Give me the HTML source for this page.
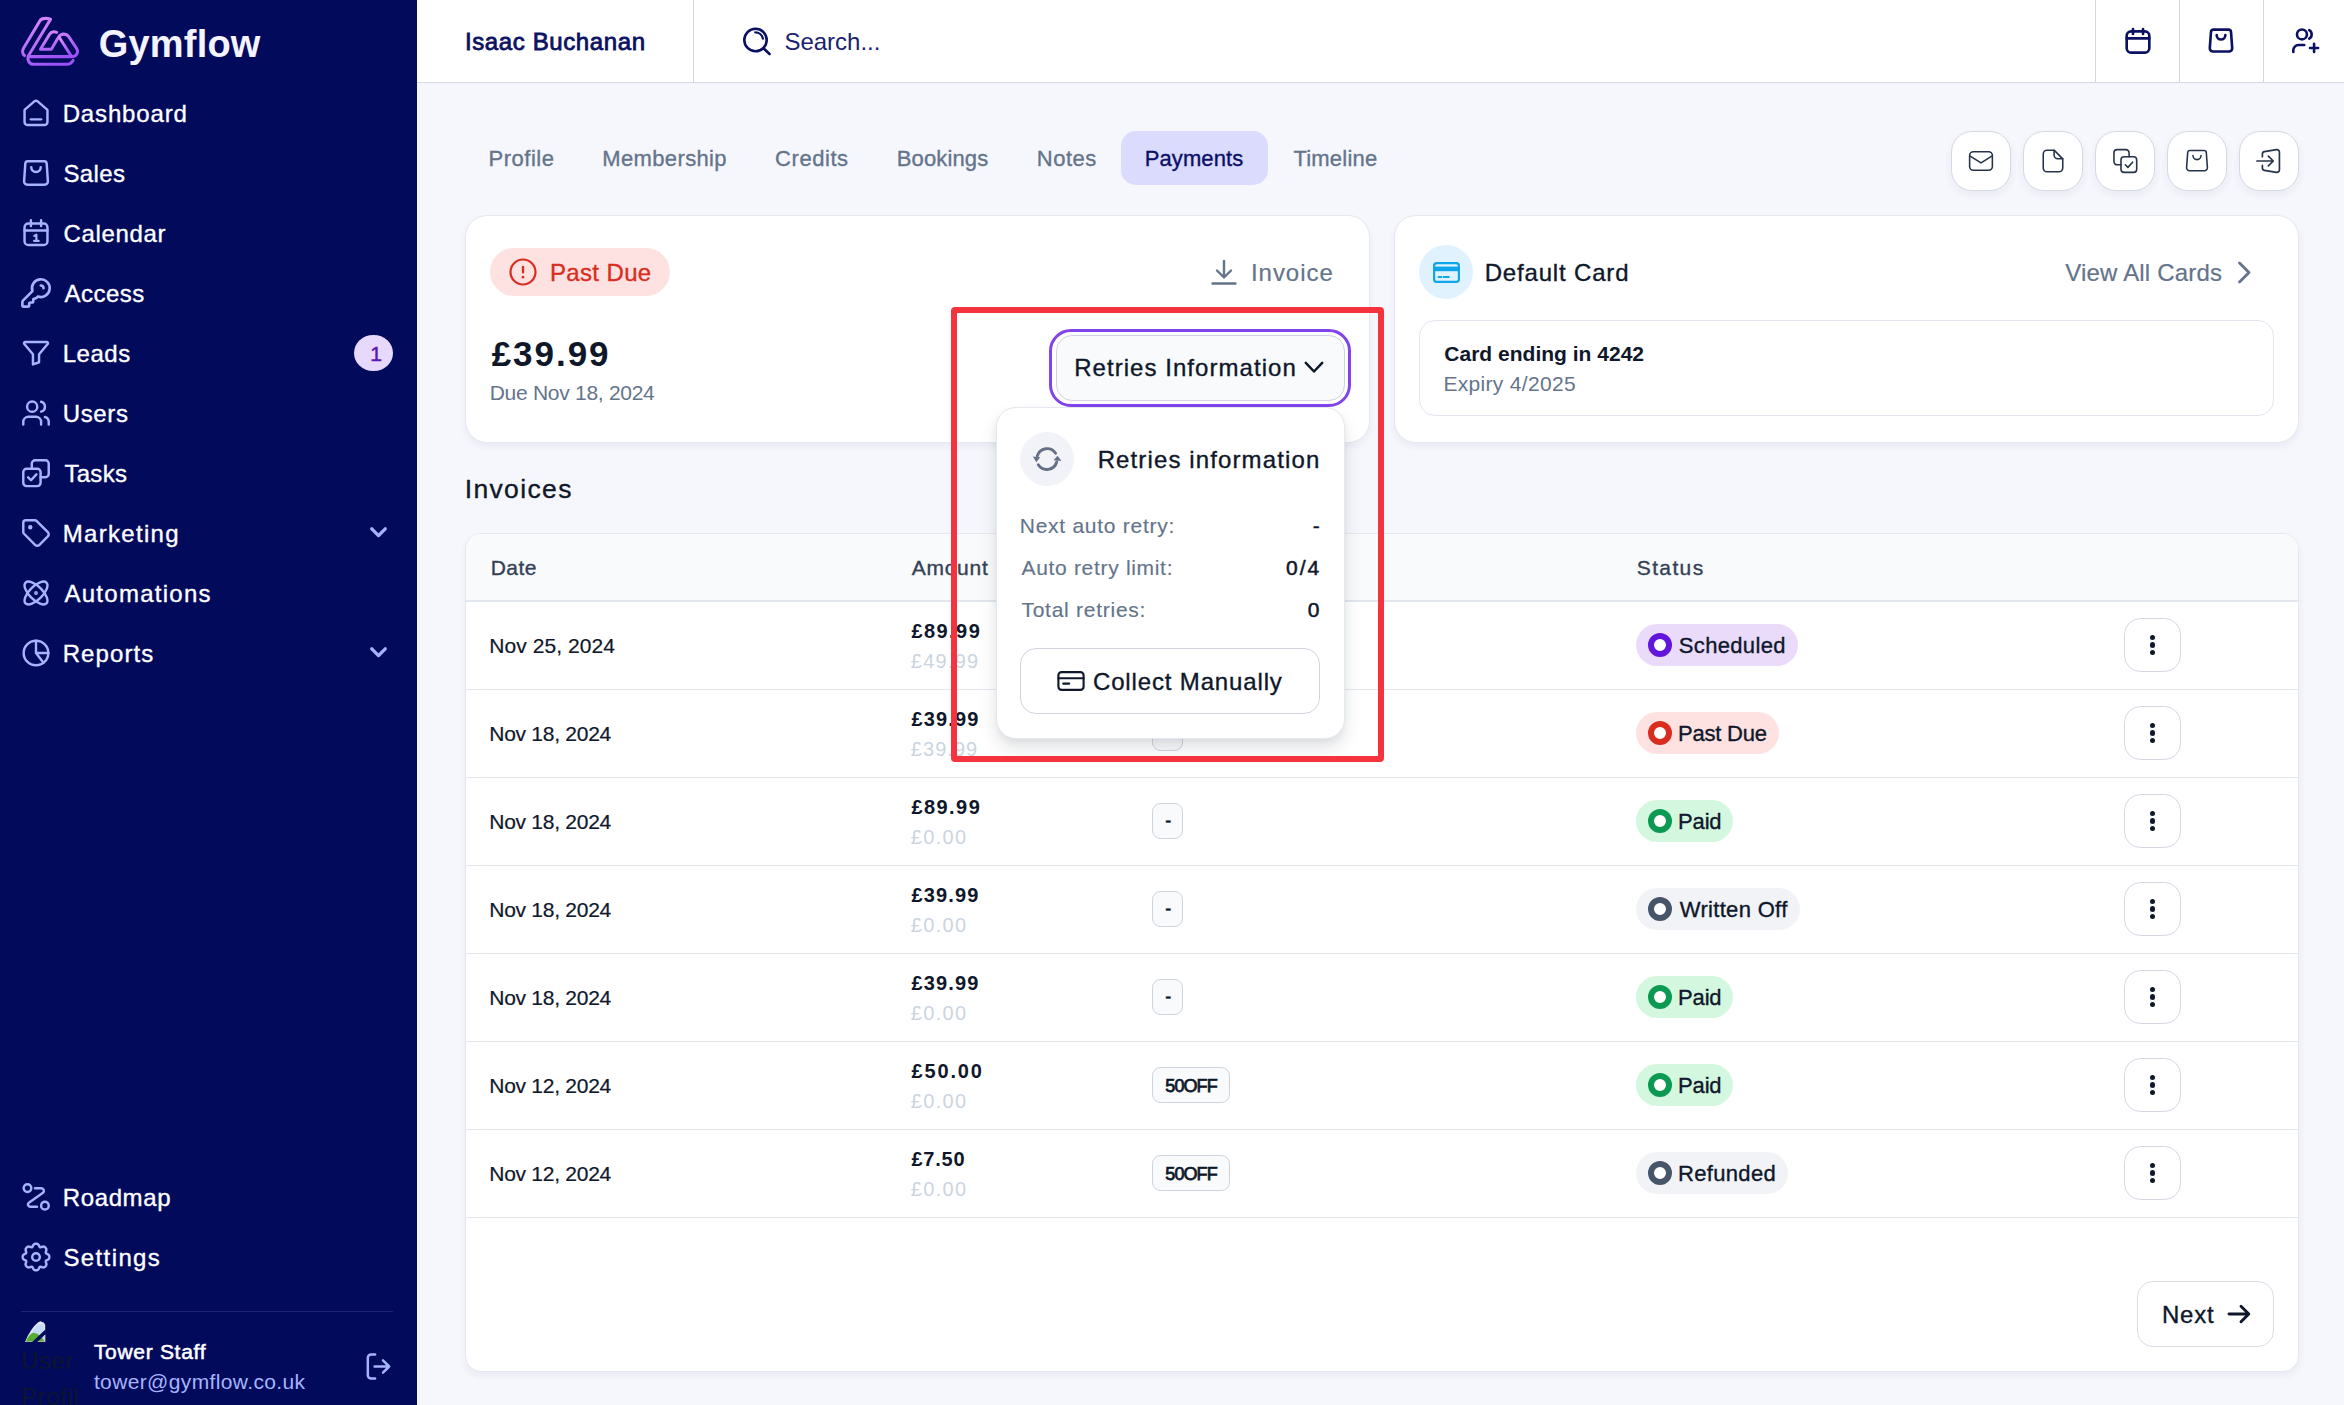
<!DOCTYPE html>
<html lang="en">
<head>
<meta charset="utf-8">
<title>Gymflow - Isaac Buchanan - Payments</title>
<style>
*{box-sizing:border-box;margin:0;padding:0}
html,body{width:2344px;height:1405px;overflow:hidden}
body{position:relative;background:#f6f7fd;font-family:"Liberation Sans",sans-serif;color:#0f172a}
.a{position:absolute}
.t{position:absolute;white-space:nowrap;z-index:2}
.t.pop{z-index:4}
svg{position:absolute;overflow:visible}
.si{fill:none;stroke:#a5b4fc;stroke-width:1.92;stroke-linecap:round;stroke-linejoin:round}
.ti{fill:none;stroke:#0b1162;stroke-width:2.25;stroke-linecap:round;stroke-linejoin:round}
.bi{fill:none;stroke:#27334a;stroke-width:1.45;stroke-linecap:round;stroke-linejoin:round}
#sidebar{left:0;top:0;width:417px;height:1405px;background:#020a5c}
#topbar{left:417px;top:0;width:1927px;height:83px;background:#fff;border-bottom:1.5px solid #d3d8e3}
.vd{top:0;width:1px;height:82px;background:#d2d6e0}
.card{background:#fff;border:1px solid #e6e8f0;border-radius:22px;box-shadow:0 4px 7px rgba(30,40,90,.06)}
.ib{top:131px;width:60px;height:60px;background:#fff;border:1px solid #d5d9e4;border-radius:21px;box-shadow:0 4px 8px rgba(30,40,90,.06)}
.hl{left:466px;width:1832px;height:1.5px;background:#e5e8ef}
.pill{left:1636px;height:42px;border-radius:21px}
.ring{left:1647.5px;width:24px;height:24px;border-radius:50%;background:#fff;border:6px solid}
.kb{left:2124px;width:57px;height:54px;background:#fff;border:1px solid #d3d8e2;border-radius:16.5px}
.kb i{position:absolute;left:25.2px;width:5.2px;height:5.2px;border-radius:50%;background:#0f172a}
.bd{left:1152.3px;height:35.4px;border:1.3px solid #ccd3df;background:#f9fafc;border-radius:8.5px}
</style>
</head>
<body>
<nav>
<!-- ================= SIDEBAR ================= -->
<div id="sidebar" class="a"></div>
<svg class="a" style="left:0;top:0" width="100" height="75" viewBox="0 0 100 75">
  <defs><linearGradient id="lg" x1="0.1" y1="0" x2="0.6" y2="1"><stop offset="0" stop-color="#dc8cfb"/><stop offset="1" stop-color="#9b51f6"/></linearGradient></defs>
  <g fill="none" stroke="url(#lg)" stroke-width="3.150" stroke-linecap="round" stroke-linejoin="round" transform="matrix(0.943 0 0 0.972 2.530 1.820)">
    <path d="M23.3 55.3 C20.6 53 20.6 50.6 22.4 47.5 L39.6 19.6 C41.5 16.6 46 16.6 51 17.8 L27.8 55 C25.5 59 28 64.3 33 64.3 H68 C71 64.3 73.5 62.5 74.8 60.3"/>
    <path d="M28.6 56.4 H73.5 C78.5 56.4 81 52 78.6 48.2 L70 35.6 C67.5 32.2 62 32.5 59.6 36 L51.8 48.8 H40.2 L50 33.2 C51.5 31 54.5 30.4 57.5 31.4"/>
    <path d="M60.6 37.2 L72.4 55"/>
  </g>
</svg>

<!-- nav icons (26px, centre x=36) -->
<svg class="si" style="left:22px;top:99px" width="28" height="28" viewBox="1 1 22 22"><path d="M3 9.6 10.7 2.9a2 2 0 0 1 2.6 0L21 9.6V19a2.5 2.5 0 0 1-2.5 2.500h-13A2.500 2.500 0 0 1 3 19z"/><path d="M8 17h8"/></svg>
<svg class="si" style="left:22px;top:159px" width="28" height="28" viewBox="1 1 22 22"><path d="M5.600 2.800h12.800a2 2 0 0 1 2 1.850l.95 13.900a2.500 2.500 0 0 1-2.500 2.650H5.150a2.500 2.500 0 0 1-2.500-2.650l.95-13.900a2 2 0 0 1 2-1.850z"/><path d="M8.300 7.500a3.700 3.700 0 0 0 7.400 0"/></svg>
<svg class="si" style="left:22px;top:219px" width="28" height="28" viewBox="1 1 22 22"><rect x="3" y="4.500" width="18" height="17" rx="3"/><path d="M3 10h18M8 2v4.500M16 2v4.500"/><path d="M10.700 14.300 12.300 13.300v4.900M10.500 18.200h3.600" stroke-width="1.700"/></svg>
<svg class="si" style="left:21px;top:278px" width="30" height="30" viewBox="1 1 22 22"><path d="M2.586 17.414A2 2 0 0 0 2 18.828V21a1 1 0 0 0 1 1h3a1 1 0 0 0 1-1v-1a1 1 0 0 1 1-1h1a1 1 0 0 0 1-1v-1a1 1 0 0 1 1-1h.172a2 2 0 0 0 1.414-.586l.814-.814a6.500 6.500 0 1 0-4-4z"/><path d="M15.500 6.500a2 2 0 0 1 2 2"/></svg>
<svg class="si" style="left:22px;top:339px" width="28" height="28" viewBox="1 1 22 22"><path d="M3.600 3.300h16.800a1 1 0 0 1 .78 1.650l-6.780 8v6.300l-4.800 1.700v-8l-6.780-8a1 1 0 0 1 .78-1.650z"/></svg>
<svg class="si" style="left:22px;top:399px" width="28" height="28" viewBox="1 1 22 22"><path d="M16 21v-2a4 4 0 0 0-4-4H6a4 4 0 0 0-4 4v2"/><circle cx="9" cy="7" r="4"/><path d="M22 21v-2a4 4 0 0 0-3-3.870"/><path d="M16 3.130a4 4 0 0 1 0 7.750"/></svg>
<svg class="si" style="left:22px;top:459px" width="28" height="28" viewBox="1 1 22 22"><rect x="2" y="8.700" width="13.600" height="13.600" rx="2.600"/><path d="M8.700 8.700V4.600A2.600 2.600 0 0 1 11.300 2h8.100A2.600 2.600 0 0 1 22 4.600v8.100a2.600 2.600 0 0 1-2.600 2.600h-3.800"/><path d="M5.800 15.400l2.300 2.300 4.200-4.600"/></svg>
<svg class="si" style="left:22px;top:519px" width="28" height="28" viewBox="1 1 22 22"><path d="M12.586 2.586A2 2 0 0 0 11.172 2H4a2 2 0 0 0-2 2v7.172a2 2 0 0 0 .586 1.414l8.704 8.704a2.426 2.426 0 0 0 3.420 0l6.580-6.580a2.426 2.426 0 0 0 0-3.420z"/><circle cx="7.500" cy="7.500" r=".8" fill="#a5b4fc"/></svg>
<svg class="si" style="left:22px;top:579px" width="28" height="28" viewBox="1 1 22 22"><circle cx="12" cy="12" r=".55" fill="#a5b4fc"/><path d="M20.200 20.200c2.040-2.030.020-7.360-4.500-11.900-4.540-4.520-9.870-6.540-11.900-4.500-2.040 2.030-.020 7.360 4.500 11.900 4.540 4.520 9.870 6.540 11.900 4.500Z"/><path d="M15.700 15.700c4.520-4.540 6.540-9.870 4.500-11.900-2.030-2.040-7.360-.020-11.900 4.500-4.520 4.540-6.540 9.870-4.500 11.900 2.030 2.040 7.360.020 11.900-4.500Z"/></svg>
<svg class="si" style="left:22px;top:639px" width="28" height="28" viewBox="1 1 22 22"><circle cx="12" cy="12" r="9.700"/><path d="M12 2.300V12h9.700M12 12l5.900 7.700"/></svg>
<svg class="si" style="left:22px;top:1183px" width="28" height="28" viewBox="1 1 22 22"><circle cx="5.300" cy="5" r="3"/><circle cx="19" cy="18.800" r="3"/><path d="M11.200 5.200h5a2 2 0 0 1 1.300 3.500L6.400 16.500a1.700 1.700 0 0 0 1 3.100h5.400"/></svg>
<svg class="si" style="left:22px;top:1243px" width="28" height="28" viewBox="1 1 22 22"><path d="M22.45 12.00 22.44 12.41 22.38 12.82 22.24 13.21 21.98 13.58 21.62 13.91 21.17 14.20 20.69 14.45 20.25 14.68 19.92 14.92 19.71 15.20 19.66 15.53 19.73 15.94 19.88 16.41 20.04 16.93 20.15 17.45 20.18 17.94 20.09 18.38 19.92 18.76 19.67 19.09 19.39 19.39 19.09 19.67 18.76 19.92 18.38 20.09 17.94 20.18 17.45 20.15 16.93 20.04 16.41 19.88 15.94 19.73 15.53 19.66 15.20 19.71 14.92 19.92 14.68 20.25 14.45 20.69 14.20 21.17 13.91 21.62 13.58 21.98 13.21 22.24 12.82 22.38 12.41 22.44 12.00 22.45 11.59 22.44 11.18 22.38 10.79 22.24 10.42 21.98 10.09 21.62 9.80 21.17 9.55 20.69 9.32 20.25 9.08 19.92 8.80 19.71 8.47 19.66 8.06 19.73 7.59 19.88 7.07 20.04 6.55 20.15 6.06 20.18 5.62 20.09 5.24 19.92 4.91 19.67 4.61 19.39 4.33 19.09 4.08 18.76 3.91 18.38 3.82 17.94 3.85 17.45 3.96 16.93 4.12 16.41 4.27 15.94 4.34 15.53 4.29 15.20 4.08 14.92 3.75 14.68 3.31 14.45 2.83 14.20 2.38 13.91 2.02 13.58 1.76 13.21 1.62 12.82 1.56 12.41 1.55 12.00 1.56 11.59 1.62 11.18 1.76 10.79 2.02 10.42 2.38 10.09 2.83 9.80 3.31 9.55 3.75 9.32 4.08 9.08 4.29 8.80 4.34 8.47 4.27 8.06 4.12 7.59 3.96 7.07 3.85 6.55 3.82 6.06 3.91 5.62 4.08 5.24 4.33 4.91 4.61 4.61 4.91 4.33 5.24 4.08 5.62 3.91 6.06 3.82 6.55 3.85 7.07 3.96 7.59 4.12 8.06 4.27 8.47 4.34 8.80 4.29 9.08 4.08 9.32 3.75 9.55 3.31 9.80 2.83 10.09 2.38 10.42 2.02 10.79 1.76 11.18 1.62 11.59 1.56 12.00 1.55 12.41 1.56 12.82 1.62 13.21 1.76 13.58 2.02 13.91 2.38 14.20 2.83 14.45 3.31 14.68 3.75 14.92 4.08 15.20 4.29 15.53 4.34 15.94 4.27 16.41 4.12 16.93 3.96 17.45 3.85 17.94 3.82 18.38 3.91 18.76 4.08 19.09 4.33 19.39 4.61 19.67 4.91 19.92 5.24 20.09 5.62 20.18 6.06 20.15 6.55 20.04 7.07 19.88 7.59 19.73 8.06 19.66 8.47 19.71 8.80 19.92 9.08 20.25 9.32 20.69 9.55 21.17 9.80 21.62 10.09 21.98 10.42 22.24 10.79 22.38 11.18 22.44 11.59z"/><circle cx="12" cy="12" r="3"/></svg>

<!-- Leads badge + chevrons -->
<div class="a" style="left:354px;top:334.500px;width:39.200px;height:36.800px;border-radius:50%;background:#e7d9fb"></div>
<svg style="left:370px;top:527px" width="17" height="11" viewBox="0 0 17 11"><path d="M1.800 1.800 8.500 8.600 15.200 1.800" fill="none" stroke="#a5b4fc" stroke-width="3.3" stroke-linecap="round" stroke-linejoin="round"/></svg>
<svg style="left:370px;top:647px" width="17" height="11" viewBox="0 0 17 11"><path d="M1.800 1.800 8.500 8.600 15.200 1.800" fill="none" stroke="#a5b4fc" stroke-width="3.3" stroke-linecap="round" stroke-linejoin="round"/></svg>

<!-- user footer -->
<div class="a" style="left:21px;top:1311px;width:372px;height:1px;background:#1c2574"></div>
<svg style="left:25px;top:1321px" width="21" height="22" viewBox="0 0 21 22"><path d="M0 21Q5.500 7.500 13.200 1.300L15.500 0.200 19 1.800 20.200 4V21z" fill="#e3e6ec"/><path d="M1.800 20Q7 8.500 13.500 3.400H18.700V20z" fill="#c5daf6"/><path d="M0.600 21Q4.500 12 8.500 11.800 13.500 12 19.200 19.500V21z" fill="#57ad33"/><path d="M0 20.300H20.200V21H0z" fill="#b9b9b9"/><path d="M6.600 21.500 20.700 8.300V13.200L11.600 21.500z" fill="#020a5c"/><path d="M19 14.800V20.300H20.200V13.700z" fill="#d0d0d0"/></svg>
<div class="a" style="left:21px;top:1343px;width:57px;height:62px;overflow:hidden;font-size:24px;line-height:36px;color:#0d1430;letter-spacing:.6px">User Profile</div>
<svg class="si" style="left:365px;top:1353px;stroke-width:2.200" width="27" height="27" viewBox="0 0 24 24"><path d="M9 22.700H5.500a3 3 0 0 1-3-3V4.300a3 3 0 0 1 3-3H9"/><path d="M16 17.500l5.500-5.500L16 6.500M21.500 12H8.500"/></svg>

<span class="t" style="left:98.79px;top:24.83px;font-size:38px;line-height:38px;color:#f5f3ff;letter-spacing:0.195px;font-weight:700;">Gymflow</span>
<span class="t" style="left:62.66px;top:101.68px;font-size:24px;line-height:24px;color:#ffffff;letter-spacing:0.857px;-webkit-text-stroke:0.35px #ffffff;">Dashboard</span>
<span class="t" style="left:63.45px;top:161.68px;font-size:24px;line-height:24px;color:#ffffff;letter-spacing:0.381px;-webkit-text-stroke:0.35px #ffffff;">Sales</span>
<span class="t" style="left:63.49px;top:221.68px;font-size:24px;line-height:24px;color:#ffffff;letter-spacing:0.657px;-webkit-text-stroke:0.35px #ffffff;">Calendar</span>
<span class="t" style="left:64.49px;top:281.68px;font-size:24px;line-height:24px;color:#ffffff;letter-spacing:0.505px;-webkit-text-stroke:0.35px #ffffff;">Access</span>
<span class="t" style="left:62.66px;top:341.68px;font-size:24px;line-height:24px;color:#ffffff;letter-spacing:0.551px;-webkit-text-stroke:0.35px #ffffff;">Leads</span>
<span class="t" style="left:62.76px;top:401.68px;font-size:24px;line-height:24px;color:#ffffff;letter-spacing:0.636px;-webkit-text-stroke:0.35px #ffffff;">Users</span>
<span class="t" style="left:64.42px;top:461.68px;font-size:24px;line-height:24px;color:#ffffff;letter-spacing:0.308px;-webkit-text-stroke:0.35px #ffffff;">Tasks</span>
<span class="t" style="left:62.66px;top:521.68px;font-size:24px;line-height:24px;color:#ffffff;letter-spacing:1.318px;-webkit-text-stroke:0.35px #ffffff;">Marketing</span>
<span class="t" style="left:64.49px;top:581.68px;font-size:24px;line-height:24px;color:#ffffff;letter-spacing:1.261px;-webkit-text-stroke:0.35px #ffffff;">Automations</span>
<span class="t" style="left:62.66px;top:641.68px;font-size:24px;line-height:24px;color:#ffffff;letter-spacing:1.101px;-webkit-text-stroke:0.35px #ffffff;">Reports</span>
<span class="t" style="left:62.66px;top:1185.68px;font-size:24px;line-height:24px;color:#ffffff;letter-spacing:0.648px;-webkit-text-stroke:0.35px #ffffff;">Roadmap</span>
<span class="t" style="left:63.45px;top:1245.68px;font-size:24px;line-height:24px;color:#ffffff;letter-spacing:1.386px;-webkit-text-stroke:0.35px #ffffff;">Settings</span>
<span class="t" style="left:370.22px;top:343.22px;font-size:21px;line-height:21px;color:#5a17b5;-webkit-text-stroke:0.5px #5a17b5;">1</span>
<span class="t" style="left:93.95px;top:1341.22px;font-size:21px;line-height:21px;color:#ffffff;letter-spacing:0.687px;-webkit-text-stroke:0.55px #ffffff;">Tower Staff</span>
<span class="t" style="left:93.92px;top:1370.72px;font-size:21px;line-height:21px;color:#a5b4fc;letter-spacing:0.368px;">tower@gymflow.co.uk</span>
</nav>
<header>
<!-- ================= TOP BAR ================= -->
<div id="topbar" class="a"></div>
<div class="a vd" style="left:692.5px"></div>
<div class="a vd" style="left:2095px"></div>
<div class="a vd" style="left:2179px"></div>
<div class="a vd" style="left:2263px"></div>
<svg class="ti" style="left:742px;top:26px;stroke-width:2.600" width="30" height="30" viewBox="0 0 30 30"><circle cx="13.500" cy="14" r="11.200"/><path d="M21.500 22.300 27.500 28"/><path d="M13.200 6.300a7.800 7.800 0 0 1 7.700 6.300" stroke-width="2.300"/></svg>
<svg class="ti" style="left:2124px;top:27px" width="28" height="28" viewBox="0 0 24 24"><rect x="2.300" y="3.800" width="19.400" height="18.200" rx="3.800"/><path d="M2.300 9.800h19.400M7.700 1.800v4.200M16.300 1.800v4.200"/></svg>
<svg class="ti" style="left:2207px;top:27px" width="28" height="28" viewBox="0 0 24 24"><path d="M5.600 2.300h12.800a2.200 2.200 0 0 1 2.200 2l1 13.800a2.700 2.700 0 0 1-2.700 2.900H5.100a2.700 2.700 0 0 1-2.700-2.900l1-13.800a2.200 2.200 0 0 1 2.200-2z"/><path d="M8.300 7a3.700 3.700 0 0 0 7.400 0"/></svg>
<svg class="ti" style="left:2291px;top:27px" width="30" height="28" viewBox="0 0 26 24"><circle cx="9.500" cy="6.300" r="4.300"/><path d="M2 21.500v-1.500a4.500 4.500 0 0 1 4.500-4.500h5"/><path d="M15.800 2.600a4.300 4.300 0 0 1 0 7.400"/><path d="M20 14.500v7M16.500 18h7"/></svg>

<span class="t" style="left:464.89px;top:29.68px;font-size:24px;line-height:24px;color:#0b1162;letter-spacing:0.620px;-webkit-text-stroke:0.8px #0b1162;">Isaac Buchanan</span>
<span class="t" style="left:784.41px;top:29.68px;font-size:24px;line-height:24px;color:#1b2270;">Search...</span>
</header>
<main>
<section>
<!-- ================= TABS + ACTION BUTTONS ================= -->
<div class="a" style="left:1121px;top:131px;width:147px;height:54px;border-radius:15px;background:#dadbfd"></div>
<div class="a ib" style="left:1951px"></div>
<div class="a ib" style="left:2023px"></div>
<div class="a ib" style="left:2095px"></div>
<div class="a ib" style="left:2167px"></div>
<div class="a ib" style="left:2239px"></div>
<svg class="bi" style="left:1968px;top:148px" width="26" height="26" viewBox="0 0 24 24"><rect x="1.500" y="3.500" width="21" height="17" rx="3.500"/><path d="M2 7.500l10 6.300 10-6.300"/></svg>
<svg class="bi" style="left:2040px;top:148px" width="26" height="26" viewBox="0 0 24 24"><path d="M13 2H6.500A3.500 3.500 0 0 0 3 5.500v13A3.500 3.500 0 0 0 6.500 22h11a3.500 3.500 0 0 0 3.500-3.500V10z"/><path d="M13 2v4.500A3.500 3.500 0 0 0 16.500 10H21"/></svg>
<svg class="bi" style="left:2112px;top:148px" width="26" height="26" viewBox="0 0 24 24"><path d="M8.300 15.500H4.800a3 3 0 0 1-3-3V4.500a3 3 0 0 1 3-3h8a3 3 0 0 1 3 3V8"/><rect x="8.300" y="8" width="14.500" height="14.500" rx="3"/><path d="M12.300 15.500l2.400 2.400 4.300-4.800"/></svg>
<svg class="bi" style="left:2184px;top:148px" width="26" height="26" viewBox="0 0 24 24"><path d="M5.600 2.300h12.800a2.200 2.200 0 0 1 2.200 2l1 13.800a2.700 2.700 0 0 1-2.700 2.900H5.100a2.700 2.700 0 0 1-2.700-2.900l1-13.800a2.200 2.200 0 0 1 2.200-2z"/><path d="M8.300 7a3.700 3.700 0 0 0 7.400 0"/></svg>
<svg class="bi" style="left:2254px;top:147px" width="28" height="28" viewBox="0 0 24 24"><path d="M7.200 8.300V6a2 2 0 0 1 1.700-2l10.300-1.700a2.200 2.200 0 0 1 2.600 2.200v15a2.200 2.200 0 0 1-2.600 2.200L8.900 20a2 2 0 0 1-1.700-2v-2.300"/><path d="M2.500 12h14M12.300 7.800l4.200 4.200-4.200 4.200"/></svg>

<span class="t" style="left:488.56px;top:147.63px;font-size:22px;line-height:22px;color:#64748b;letter-spacing:0.516px;-webkit-text-stroke:0.35px #64748b;">Profile</span>
<span class="t" style="left:602.31px;top:147.63px;font-size:22px;line-height:22px;color:#64748b;letter-spacing:0.359px;-webkit-text-stroke:0.35px #64748b;">Membership</span>
<span class="t" style="left:775.04px;top:147.63px;font-size:22px;line-height:22px;color:#64748b;letter-spacing:0.566px;-webkit-text-stroke:0.35px #64748b;">Credits</span>
<span class="t" style="left:896.81px;top:147.63px;font-size:22px;line-height:22px;color:#64748b;letter-spacing:0.134px;-webkit-text-stroke:0.35px #64748b;">Bookings</span>
<span class="t" style="left:1036.81px;top:147.63px;font-size:22px;line-height:22px;color:#64748b;letter-spacing:0.478px;-webkit-text-stroke:0.35px #64748b;">Notes</span>
<span class="t" style="left:1293.42px;top:147.63px;font-size:22px;line-height:22px;color:#64748b;letter-spacing:0.207px;-webkit-text-stroke:0.35px #64748b;">Timeline</span>
<span class="t" style="left:1144.81px;top:147.63px;font-size:22px;line-height:22px;color:#0b0f66;letter-spacing:0.081px;-webkit-text-stroke:0.35px #0b0f66;">Payments</span>
</section>
<section>
<!-- ================= LEFT CARD ================= -->
<div class="a card" style="left:465px;top:215px;width:905px;height:227.5px"></div>
<div class="a" style="left:490px;top:248px;width:180px;height:48px;border-radius:24px;background:#fee2e2"></div>
<svg style="left:509px;top:258px" width="28" height="28" viewBox="0 0 28 28"><circle cx="14" cy="14" r="12.500" fill="none" stroke="#d92d20" stroke-width="2.200"/><path d="M14 8.800v5.600" stroke="#d92d20" stroke-width="2.300" stroke-linecap="round"/><circle cx="14" cy="19.200" r="1.350" fill="#d92d20"/></svg>
<svg style="left:1211px;top:259px" width="26" height="26" viewBox="0 0 26 26"><path d="M13 2v16M6 11.500l7 7 7-7M1.500 24.500h23" fill="none" stroke="#64748b" stroke-width="2.400" stroke-linecap="round" stroke-linejoin="round"/></svg>
<!-- retries button -->
<div class="a" style="left:1049px;top:329px;width:302px;height:78px;border-radius:22px;border:3px solid #8243ec;background:#fff"></div>
<div class="a" style="left:1056px;top:335px;width:289px;height:66px;border-radius:16px;border:1px solid #cfd4de;background:#f9fafc"></div>
<svg style="left:1304px;top:361px" width="20" height="13" viewBox="0 0 20 13"><path d="M1.800 1.800 10 10.500 18.200 1.800" fill="none" stroke="#0f172a" stroke-width="2.500" stroke-linecap="round" stroke-linejoin="round"/></svg>

<span class="t" style="left:549.91px;top:260.93px;font-size:24px;line-height:24px;color:#d92d20;letter-spacing:0.371px;-webkit-text-stroke:0.35px #d92d20;">Past Due</span>
<span class="t" style="left:1250.97px;top:260.93px;font-size:24px;line-height:24px;color:#64748b;letter-spacing:0.955px;-webkit-text-stroke:0.2px #64748b;">Invoice</span>
<span class="t" style="left:491.66px;top:335.97px;font-size:35px;line-height:35px;color:#0f172a;letter-spacing:1.967px;font-weight:700;">£39.99</span>
<span class="t" style="left:489.68px;top:382.22px;font-size:21px;line-height:21px;color:#64748b;letter-spacing:-0.277px;">Due Nov 18, 2024</span>
<span class="t" style="left:1074.16px;top:355.98px;font-size:24px;line-height:24px;color:#0f172a;letter-spacing:1.048px;-webkit-text-stroke:0.35px #0f172a;">Retries Information</span>
</section>
<section>
<!-- ================= RIGHT CARD ================= -->
<div class="a card" style="left:1394px;top:215px;width:905px;height:227.5px"></div>
<div class="a" style="left:1419px;top:245px;width:54px;height:54px;border-radius:50%;background:#e0f2fe"></div>
<svg style="left:1433px;top:261.500px" width="27" height="21" viewBox="0 0 27 21"><rect x="1.100" y="1.100" width="24.800" height="18.800" rx="2.600" fill="none" stroke="#0ea5e9" stroke-width="2.200"/><rect x="1.100" y="4.600" width="24.800" height="4.600" fill="#0ea5e9"/><path d="M5.600 15h2.800M10.800 15h5" stroke="#0ea5e9" stroke-width="2.100" stroke-linecap="round"/></svg>
<svg style="left:2237px;top:261px" width="15" height="23" viewBox="0 0 15 23"><path d="M2.500 2 12 11.500 2.500 21" fill="none" stroke="#64748b" stroke-width="2.800" stroke-linecap="round" stroke-linejoin="round"/></svg>
<div class="a" style="left:1419px;top:320px;width:855px;height:96px;border-radius:16px;border:1px solid #e2e6ee;background:#fff"></div>

<span class="t" style="left:1484.66px;top:260.93px;font-size:24px;line-height:24px;color:#0f172a;letter-spacing:0.829px;-webkit-text-stroke:0.35px #0f172a;">Default Card</span>
<span class="t" style="left:2065.21px;top:260.93px;font-size:24px;line-height:24px;color:#64748b;letter-spacing:0.200px;-webkit-text-stroke:0.2px #64748b;">View All Cards</span>
<span class="t" style="left:1444.32px;top:343.47px;font-size:21px;line-height:21px;color:#0f172a;letter-spacing:0.008px;font-weight:700;">Card ending in 4242</span>
<span class="t" style="left:1443.43px;top:373.47px;font-size:21px;line-height:21px;color:#64748b;letter-spacing:0.314px;">Expiry 4/2025</span>
</section>
<section>
<!-- ================= TABLE ================= -->
<div class="a card" style="left:465px;top:533px;width:1834px;height:839px;overflow:hidden;border-radius:16px">
  <div class="a" style="left:0;top:0;width:1834px;height:67px;background:#f9fafb"></div>
</div>
<div class="a hl" style="top:600px;height:2px;background:#e3e6ee"></div>
<div class="a hl" style="top:688.500px"></div>
<div class="a hl" style="top:776.500px"></div>
<div class="a hl" style="top:864.500px"></div>
<div class="a hl" style="top:952.500px"></div>
<div class="a hl" style="top:1040.500px"></div>
<div class="a hl" style="top:1128.500px"></div>
<div class="a hl" style="top:1216.500px"></div>
<div class="a pill" style="top:624px;width:162px;background:#eadbfb"></div>
<div class="a ring" style="top:633px;border-color:#6316db"></div>
<div class="a kb" style="top:618px"><i style="top:15.5px"></i><i style="top:23.4px"></i><i style="top:31.3px"></i></div>
<div class="a bd" style="top:627.2px;width:30.4px"></div>
<div class="a pill" style="top:712px;width:143px;background:#fee2e2"></div>
<div class="a ring" style="top:721px;border-color:#d92d20"></div>
<div class="a kb" style="top:706px"><i style="top:15.5px"></i><i style="top:23.4px"></i><i style="top:31.3px"></i></div>
<div class="a bd" style="top:715.2px;width:30.4px"></div>
<div class="a pill" style="top:800px;width:97px;background:#d3f8df"></div>
<div class="a ring" style="top:809px;border-color:#0c9a52"></div>
<div class="a kb" style="top:794px"><i style="top:15.5px"></i><i style="top:23.4px"></i><i style="top:31.3px"></i></div>
<div class="a bd" style="top:803.2px;width:30.4px"></div>
<div class="a pill" style="top:888px;width:164px;background:#f1f3f7"></div>
<div class="a ring" style="top:897px;border-color:#475569"></div>
<div class="a kb" style="top:882px"><i style="top:15.5px"></i><i style="top:23.4px"></i><i style="top:31.3px"></i></div>
<div class="a bd" style="top:891.2px;width:30.4px"></div>
<div class="a pill" style="top:976px;width:97px;background:#d3f8df"></div>
<div class="a ring" style="top:985px;border-color:#0c9a52"></div>
<div class="a kb" style="top:970px"><i style="top:15.5px"></i><i style="top:23.4px"></i><i style="top:31.3px"></i></div>
<div class="a bd" style="top:979.2px;width:30.4px"></div>
<div class="a pill" style="top:1064px;width:97px;background:#d3f8df"></div>
<div class="a ring" style="top:1073px;border-color:#0c9a52"></div>
<div class="a kb" style="top:1058px"><i style="top:15.5px"></i><i style="top:23.4px"></i><i style="top:31.3px"></i></div>
<div class="a bd" style="top:1067.2px;width:77.6px"></div>
<div class="a pill" style="top:1152px;width:152px;background:#f1f3f7"></div>
<div class="a ring" style="top:1161px;border-color:#475569"></div>
<div class="a kb" style="top:1146px"><i style="top:15.5px"></i><i style="top:23.4px"></i><i style="top:31.3px"></i></div>
<div class="a bd" style="top:1155.2px;width:77.6px"></div>
<!-- next -->
<div class="a" style="left:2137px;top:1281px;width:137px;height:66px;border-radius:16px;border:1px solid #d9dde7;background:#fff"></div>
<svg style="left:2227px;top:1303px" width="24" height="22" viewBox="0 0 24 22"><path d="M2 11h19.500M14 3.200l7.800 7.800-7.800 7.800" fill="none" stroke="#0f172a" stroke-width="2.900" stroke-linecap="round" stroke-linejoin="round"/></svg>

<span class="t" style="left:464.69px;top:475.57px;font-size:26.5px;line-height:26.5px;color:#0f172a;letter-spacing:1.355px;-webkit-text-stroke:0.35px #0f172a;">Invoices</span>
<span class="t" style="left:490.65px;top:557.22px;font-size:21px;line-height:21px;color:#334155;letter-spacing:0.457px;-webkit-text-stroke:0.35px #334155;">Date</span>
<span class="t" style="left:911.74px;top:557.22px;font-size:21px;line-height:21px;color:#334155;letter-spacing:0.736px;-webkit-text-stroke:0.35px #334155;">Amount</span>
<span class="t" style="left:1636.76px;top:557.22px;font-size:21px;line-height:21px;color:#334155;letter-spacing:1.376px;-webkit-text-stroke:0.35px #334155;">Status</span>
<span class="t" style="left:489.27px;top:634.92px;font-size:21px;line-height:21px;color:#0f172a;letter-spacing:0.064px;-webkit-text-stroke:0.2px #0f172a;">Nov 25, 2024</span>
<span class="t" style="left:911.44px;top:621.07px;font-size:20px;line-height:20px;color:#0f172a;letter-spacing:1.428px;font-weight:700;">£89.99</span>
<span class="t" style="left:910.80px;top:650.57px;font-size:20px;line-height:20px;color:#cbd5e1;letter-spacing:1.243px;">£49.99</span>
<span class="t" style="left:1165.20px;top:635.76px;font-size:18px;line-height:18px;color:#0f172a;-webkit-text-stroke:0.5px #0f172a;">-</span>
<span class="t" style="left:1678.79px;top:634.78px;font-size:22px;line-height:22px;color:#0f172a;letter-spacing:0.338px;-webkit-text-stroke:0.35px #0f172a;">Scheduled</span>
<span class="t" style="left:489.27px;top:722.92px;font-size:21px;line-height:21px;color:#0f172a;letter-spacing:-0.270px;-webkit-text-stroke:0.2px #0f172a;">Nov 18, 2024</span>
<span class="t" style="left:911.44px;top:709.07px;font-size:20px;line-height:20px;color:#0f172a;letter-spacing:1.152px;font-weight:700;">£39.99</span>
<span class="t" style="left:910.80px;top:738.57px;font-size:20px;line-height:20px;color:#cbd5e1;letter-spacing:1.043px;">£39.99</span>
<span class="t" style="left:1165.20px;top:723.76px;font-size:18px;line-height:18px;color:#0f172a;-webkit-text-stroke:0.5px #0f172a;">-</span>
<span class="t" style="left:1678.01px;top:722.78px;font-size:22px;line-height:22px;color:#0f172a;letter-spacing:-0.227px;-webkit-text-stroke:0.35px #0f172a;">Past Due</span>
<span class="t" style="left:489.27px;top:810.92px;font-size:21px;line-height:21px;color:#0f172a;letter-spacing:-0.270px;-webkit-text-stroke:0.2px #0f172a;">Nov 18, 2024</span>
<span class="t" style="left:911.44px;top:797.07px;font-size:20px;line-height:20px;color:#0f172a;letter-spacing:1.428px;font-weight:700;">£89.99</span>
<span class="t" style="left:910.80px;top:826.57px;font-size:20px;line-height:20px;color:#cbd5e1;letter-spacing:1.302px;">£0.00</span>
<span class="t" style="left:1165.20px;top:811.76px;font-size:18px;line-height:18px;color:#0f172a;-webkit-text-stroke:0.5px #0f172a;">-</span>
<span class="t" style="left:1678.01px;top:810.78px;font-size:22px;line-height:22px;color:#0f172a;letter-spacing:-0.141px;-webkit-text-stroke:0.35px #0f172a;">Paid</span>
<span class="t" style="left:489.27px;top:898.92px;font-size:21px;line-height:21px;color:#0f172a;letter-spacing:-0.270px;-webkit-text-stroke:0.2px #0f172a;">Nov 18, 2024</span>
<span class="t" style="left:911.44px;top:885.07px;font-size:20px;line-height:20px;color:#0f172a;letter-spacing:1.152px;font-weight:700;">£39.99</span>
<span class="t" style="left:910.80px;top:914.57px;font-size:20px;line-height:20px;color:#cbd5e1;letter-spacing:1.302px;">£0.00</span>
<span class="t" style="left:1165.20px;top:899.76px;font-size:18px;line-height:18px;color:#0f172a;-webkit-text-stroke:0.5px #0f172a;">-</span>
<span class="t" style="left:1679.69px;top:898.78px;font-size:22px;line-height:22px;color:#0f172a;letter-spacing:0.325px;-webkit-text-stroke:0.35px #0f172a;">Written Off</span>
<span class="t" style="left:489.27px;top:986.92px;font-size:21px;line-height:21px;color:#0f172a;letter-spacing:-0.270px;-webkit-text-stroke:0.2px #0f172a;">Nov 18, 2024</span>
<span class="t" style="left:911.44px;top:973.07px;font-size:20px;line-height:20px;color:#0f172a;letter-spacing:1.152px;font-weight:700;">£39.99</span>
<span class="t" style="left:910.80px;top:1002.57px;font-size:20px;line-height:20px;color:#cbd5e1;letter-spacing:1.302px;">£0.00</span>
<span class="t" style="left:1165.20px;top:987.76px;font-size:18px;line-height:18px;color:#0f172a;-webkit-text-stroke:0.5px #0f172a;">-</span>
<span class="t" style="left:1678.01px;top:986.78px;font-size:22px;line-height:22px;color:#0f172a;letter-spacing:-0.141px;-webkit-text-stroke:0.35px #0f172a;">Paid</span>
<span class="t" style="left:489.27px;top:1074.92px;font-size:21px;line-height:21px;color:#0f172a;letter-spacing:-0.270px;-webkit-text-stroke:0.2px #0f172a;">Nov 12, 2024</span>
<span class="t" style="left:911.44px;top:1061.07px;font-size:20px;line-height:20px;color:#0f172a;letter-spacing:1.867px;font-weight:700;">£50.00</span>
<span class="t" style="left:910.80px;top:1090.57px;font-size:20px;line-height:20px;color:#cbd5e1;letter-spacing:1.302px;">£0.00</span>
<span class="t" style="left:1165.31px;top:1076.66px;font-size:18px;line-height:18px;color:#0f172a;letter-spacing:-0.902px;-webkit-text-stroke:0.75px #0f172a;">50OFF</span>
<span class="t" style="left:1678.01px;top:1074.78px;font-size:22px;line-height:22px;color:#0f172a;letter-spacing:-0.141px;-webkit-text-stroke:0.35px #0f172a;">Paid</span>
<span class="t" style="left:489.27px;top:1162.92px;font-size:21px;line-height:21px;color:#0f172a;letter-spacing:-0.270px;-webkit-text-stroke:0.2px #0f172a;">Nov 12, 2024</span>
<span class="t" style="left:911.44px;top:1149.07px;font-size:20px;line-height:20px;color:#0f172a;letter-spacing:0.790px;font-weight:700;">£7.50</span>
<span class="t" style="left:910.80px;top:1178.57px;font-size:20px;line-height:20px;color:#cbd5e1;letter-spacing:1.302px;">£0.00</span>
<span class="t" style="left:1165.31px;top:1164.66px;font-size:18px;line-height:18px;color:#0f172a;letter-spacing:-0.902px;-webkit-text-stroke:0.75px #0f172a;">50OFF</span>
<span class="t" style="left:1678.01px;top:1162.78px;font-size:22px;line-height:22px;color:#0f172a;letter-spacing:0.328px;-webkit-text-stroke:0.35px #0f172a;">Refunded</span>
<span class="t" style="left:2161.96px;top:1303.28px;font-size:24px;line-height:24px;color:#0f172a;letter-spacing:0.767px;-webkit-text-stroke:0.35px #0f172a;">Next</span>
</section>
<section>
<!-- ================= POPOVER ================= -->
<div class="a" style="z-index:3;left:995.500px;top:407px;width:349px;height:332px;border-radius:20px;background:#fff;border:1px solid #e6e8f0;box-shadow:0 10px 18px rgba(15,23,42,.11),0 3px 6px rgba(15,23,42,.05)"></div>
<div class="a" style="z-index:4;left:1020px;top:432px;width:54px;height:54px;border-radius:50%;background:#f1f3f8"></div>
<svg style="z-index:4;left:1032px;top:444px" width="30" height="30" viewBox="0 0 30 30"><g fill="none" stroke="#667085" stroke-width="2.900" stroke-linecap="round"><path d="M23.600 9.200A10.200 10.200 0 0 0 5.300 12"/><path d="M6.300 20.800A10.200 10.200 0 0 0 24.700 18"/></g><path d="M0.900 12.400 8.200 13.300 4.300 18.200z" fill="#667085"/><path d="M21.500 16.300 25.600 11.800 29.400 17z" fill="#667085"/></svg>
<div class="a" style="z-index:4;left:1020px;top:648px;width:300px;height:66px;border-radius:16px;border:1px solid #cfd4de;background:#fff"></div>
<svg style="z-index:4;left:1057px;top:670px" width="28" height="22" viewBox="0 0 28 22"><rect x="1.400" y="2.100" width="25.200" height="17.800" rx="3.200" fill="none" stroke="#0f172a" stroke-width="2.100"/><path d="M1.400 8.200h25.200M6.200 13.600h6" stroke="#0f172a" stroke-width="2.100" stroke-linecap="round"/></svg>

<span class="t pop" style="left:1097.66px;top:447.88px;font-size:24px;line-height:24px;color:#0f172a;letter-spacing:1.122px;-webkit-text-stroke:0.35px #0f172a;">Retries information</span>
<span class="t pop" style="left:1019.76px;top:515.22px;font-size:21px;line-height:21px;color:#64748b;letter-spacing:0.729px;-webkit-text-stroke:0.15px #64748b;">Next auto retry:</span>
<span class="t pop" style="left:1021.46px;top:557.22px;font-size:21px;line-height:21px;color:#64748b;letter-spacing:0.687px;-webkit-text-stroke:0.15px #64748b;">Auto retry limit:</span>
<span class="t pop" style="left:1021.41px;top:599.22px;font-size:21px;line-height:21px;color:#64748b;letter-spacing:0.744px;-webkit-text-stroke:0.15px #64748b;">Total retries:</span>
<span class="t pop" style="left:1312.70px;top:515.22px;font-size:21px;line-height:21px;color:#0f172a;-webkit-text-stroke:0.35px #0f172a;">-</span>
<span class="t pop" style="left:1286.05px;top:557.22px;font-size:21px;line-height:21px;color:#0f172a;letter-spacing:1.910px;-webkit-text-stroke:0.5px #0f172a;">0/4</span>
<span class="t pop" style="left:1307.80px;top:599.22px;font-size:21px;line-height:21px;color:#0f172a;-webkit-text-stroke:0.5px #0f172a;">0</span>
<span class="t pop" style="left:1092.99px;top:669.68px;font-size:24px;line-height:24px;color:#0f172a;letter-spacing:0.850px;-webkit-text-stroke:0.35px #0f172a;">Collect Manually</span>
</section>
</main>

<!-- ================= RED ANNOTATION ================= -->
<div class="a" style="z-index:6;left:951px;top:307px;width:432.500px;height:455px;border:6.500px solid #f5333f;border-radius:4px"></div>
</body>
</html>
